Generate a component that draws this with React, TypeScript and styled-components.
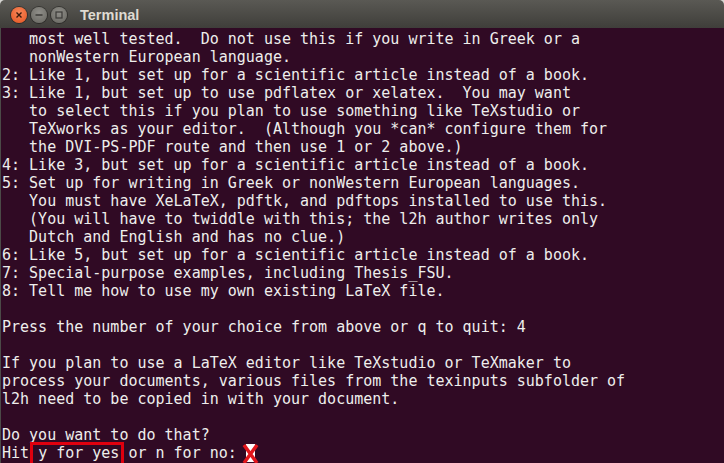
import styled, { createGlobalStyle } from "styled-components";

const lines: string[] = [
  "   most well tested.  Do not use this if you write in Greek or a",
  "   nonWestern European language.",
  "2: Like 1, but set up for a scientific article instead of a book.",
  "3: Like 1, but set up to use pdflatex or xelatex.  You may want",
  "   to select this if you plan to use something like TeXstudio or",
  "   TeXworks as your editor.  (Although you *can* configure them for",
  "   the DVI-PS-PDF route and then use 1 or 2 above.)",
  "4: Like 3, but set up for a scientific article instead of a book.",
  "5: Set up for writing in Greek or nonWestern European languages.",
  "   You must have XeLaTeX, pdftk, and pdftops installed to use this.",
  "   (You will have to twiddle with this; the l2h author writes only",
  "   Dutch and English and has no clue.)",
  "6: Like 5, but set up for a scientific article instead of a book.",
  "7: Special-purpose examples, including Thesis_FSU.",
  "8: Tell me how to use my own existing LaTeX file.",
  "",
  "Press the number of your choice from above or q to quit: 4",
  "",
  "If you plan to use a LaTeX editor like TeXstudio or TeXmaker to",
  "process your documents, various files from the texinputs subfolder of",
  "l2h need to be copied in with your document.",
  "",
  "Do you want to do that?",
];

const GlobalStyle = createGlobalStyle`
  html, body {
    margin: 0;
    padding: 0;
    background: #d6d6d2;
    overflow: hidden;
  }
`;

const Window = styled.div`
  width: 724px;
  height: 463px;
  display: flex;
  flex-direction: column;
  border-radius: 5px 5px 0 0;
  overflow: hidden;
`;

const TitleBar = styled.div`
  height: 28px;
  flex: none;
  display: flex;
  align-items: center;
  padding-left: 11px;
  gap: 4px;
  background: linear-gradient(#5a5954, #3f3e3a);
`;

const WinButton = styled.span<{ $close?: boolean }>`
  width: 16px;
  height: 16px;
  border-radius: 50%;
  display: flex;
  align-items: center;
  justify-content: center;
  margin-top: 2px;
  background: ${(p) =>
    p.$close
      ? "radial-gradient(circle at 50% 35%, #f7875a, #e4531f)"
      : "radial-gradient(circle at 50% 35%, #8f8e89, #66655f)"};
  box-shadow: 0 0 0 1px rgba(0, 0, 0, 0.35);
`;

const Title = styled.span`
  margin-left: 9px;
  margin-top: 1px;
  font-family: "Liberation Sans", "Noto Sans", sans-serif;
  font-weight: bold;
  font-size: 14.5px;
  color: #dfdbd2;
`;

const Screen = styled.div`
  flex: 1;
  background: #300a24;
  border-left: 1px solid #4b4a47;
  padding: 2px 0 0 1px;
  font-family: "DejaVu Sans Mono", "Liberation Mono", monospace;
  font-size: 15px;
  line-height: 18px;
  color: #eeeeec;
  white-space: pre;
  overflow: hidden;
`;

const Line = styled.div`
  height: 18px;
`;

const Marked = styled.span`
  position: relative;
  &::after {
    content: "";
    position: absolute;
    left: -8px;
    right: -5px;
    top: -2px;
    bottom: -4px;
    border: 3px solid #e0000e;
  }
`;

const Cursor = styled.span`
  position: relative;
  display: inline-block;
  width: 9px;
  height: 18px;
  vertical-align: top;
  background: #ffffff;
  svg {
    position: absolute;
    left: -4px;
    top: 0;
  }
`;

const CloseGlyph = () => (
  <svg width="8" height="8" viewBox="0 0 8 8">
    <path d="M1.5 1.5 L6.5 6.5 M6.5 1.5 L1.5 6.5" stroke="#3a1a0c" strokeWidth="1.4" />
  </svg>
);

const MinGlyph = () => (
  <svg width="10" height="10" viewBox="0 0 10 10">
    <path d="M1.5 5 H8.5" stroke="#3b3a37" strokeWidth="1.6" />
  </svg>
);

const MaxGlyph = () => (
  <svg width="10" height="10" viewBox="0 0 10 10">
    <rect x="2" y="2" width="6" height="6" fill="none" stroke="#3b3a37" strokeWidth="1.2" />
  </svg>
);

export default function App() {
  return (
    <>
      <GlobalStyle />
      <Window>
        <TitleBar>
          <WinButton $close>
            <CloseGlyph />
          </WinButton>
          <WinButton>
            <MinGlyph />
          </WinButton>
          <WinButton>
            <MaxGlyph />
          </WinButton>
          <Title>Terminal</Title>
        </TitleBar>
        <Screen>
          {lines.map((l, i) => (
            <Line key={i}>{l}</Line>
          ))}
          <Line>
            {"Hit "}
            <Marked>y for yes</Marked>
            {" or n for no: "}
            <Cursor>
              <svg width="17" height="20" viewBox="0 0 17 20">
                <path d="M2 1 L15 19 M15 1 L2 19" stroke="#e2161c" strokeWidth="3.5" />
              </svg>
            </Cursor>
          </Line>
        </Screen>
      </Window>
    </>
  );
}
